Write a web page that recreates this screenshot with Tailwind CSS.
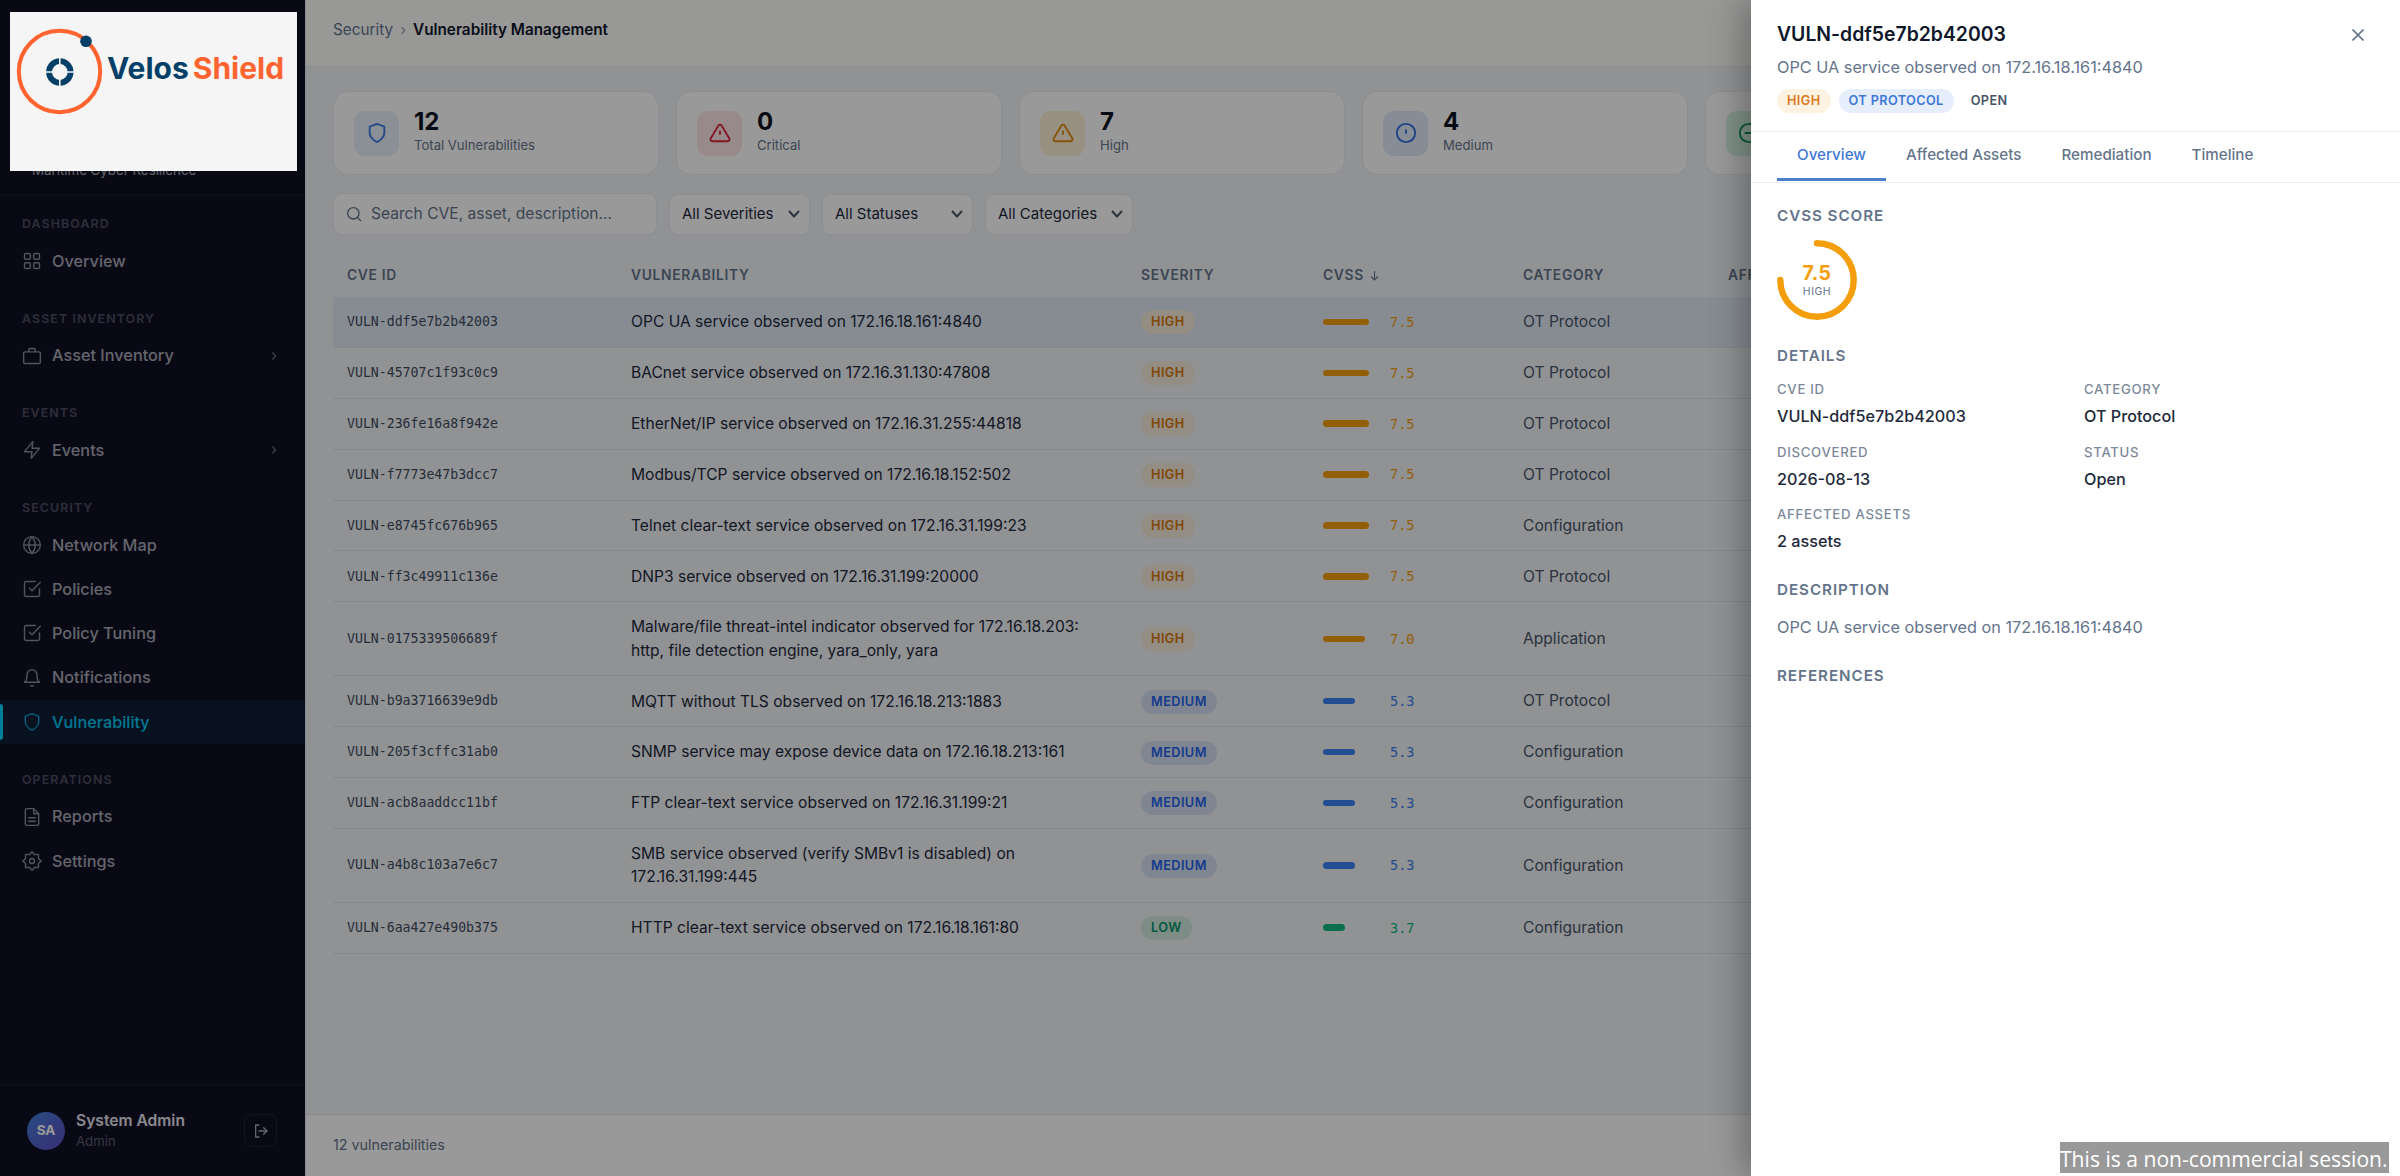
<!DOCTYPE html>
<html lang="en">
<head>
    <meta charset="UTF-8">
    <meta name="viewport" content="width=device-width, initial-scale=1.0">
    <title>Vulnerability Management</title>
    <script src="https://cdn.jsdelivr.net/npm/@tailwindcss/browser@4"></script>
</head>
<body class="bg-[#f1f4f7] font-['Inter','Liberation_Sans',sans-serif]">
<div class="relative flex h-screen w-screen overflow-hidden">

    <!-- Sidebar -->
    <aside class="flex w-[305px] shrink-0 flex-col bg-[#101026] text-[#a9a9b5]">
        <div class="flex h-[196px] shrink-0 items-end border-b border-white/5 px-8 pb-[15px]">
            <p class="text-[13.3px] leading-5">Maritime Cyber Resilience</p>
        </div>
        <nav id="nav" class="flex flex-1 flex-col gap-[21.5px] pt-[14px]"></nav>
        <div class="flex h-[92px] shrink-0 items-center border-t border-white/5 pl-[27px] pr-[28px]">
            <div class="flex size-[38px] items-center justify-center rounded-full bg-linear-to-br from-[#3f7fd8] to-[#5b4bc4] text-[13.5px] font-bold text-white">SA</div>
            <div class="ml-[11px] flex-1">
                <p class="text-[15.6px] font-semibold leading-[20px] text-[#e4e4ec]">System Admin</p>
                <p class="text-[13.2px] leading-[20px] text-[#5d5d70]">Admin</p>
            </div>
            <button class="flex size-[33px] items-center justify-center rounded-lg border border-white/8">
                <svg class="size-4" viewBox="0 0 24 24" fill="none" stroke="currentColor" stroke-width="2" stroke-linecap="round" stroke-linejoin="round"><path d="M9 21H4V3h5"/><path d="M16 17l5-5-5-5"/><path d="M21 12H9"/></svg>
            </button>
        </div>
    </aside>

    <!-- Main -->
    <main class="flex min-w-0 flex-1 flex-col border-l border-[#e2e8f0]">
        <header class="flex h-[67px] shrink-0 items-center gap-[7px] border-b border-[#e8ecf0] bg-[#fdfefc] px-[27px] pb-[6px] text-[15.3px]">
            <span class="text-[#64748b]">Security</span>
            <span class="text-[#94a3b8]">›</span>
            <span class="font-semibold text-[#0f172a]">Vulnerability Management</span>
        </header>

        <div class="flex min-h-0 flex-1 flex-col pl-[27px] pr-[26px] pt-[24px]">
            <div class="grid grid-cols-6 gap-[17px]">
                <div class="flex h-[84px] items-center gap-[15px] rounded-[15px] border border-[#e8ecf0] bg-white pl-[20px]">
                    <div class="flex size-[45px] items-center justify-center rounded-[11px] bg-[#e8eefb] text-[#3b7be0]">
                        <svg class="size-[22px]" viewBox="0 0 24 24" fill="none" stroke="currentColor" stroke-width="2" stroke-linejoin="round"><path d="M12 22s8-4 8-10V5l-8-3-8 3v7c0 6 8 10 8 10z"/></svg>
                    </div>
                    <div class="pb-[4px]">
                        <p class="text-[24px] font-bold leading-[26px] text-[#0b1220]">12</p>
                        <p class="mt-px text-[13.1px] leading-[18px] text-[#64748b]">Total Vulnerabilities</p>
                    </div>
                </div>
                <div class="flex h-[84px] items-center gap-[15px] rounded-[15px] border border-[#e8ecf0] bg-white pl-[20px]">
                    <div class="flex size-[45px] items-center justify-center rounded-[11px] bg-[#fde4e6] text-[#dc2640]">
                        <svg class="size-[22px]" viewBox="0 0 24 24" fill="none" stroke="currentColor" stroke-width="2" stroke-linecap="round" stroke-linejoin="round"><path d="M10.3 3.9L1.8 18a2 2 0 0 0 1.7 3h17a2 2 0 0 0 1.7-3L13.7 3.9a2 2 0 0 0-3.4 0z"/><path d="M12 10v3"/></svg>
                    </div>
                    <div class="pb-[4px]">
                        <p class="text-[24px] font-bold leading-[26px] text-[#0b1220]">0</p>
                        <p class="mt-px text-[13.1px] leading-[18px] text-[#64748b]">Critical</p>
                    </div>
                </div>
                <div class="flex h-[84px] items-center gap-[15px] rounded-[15px] border border-[#e8ecf0] bg-white pl-[20px]">
                    <div class="flex size-[45px] items-center justify-center rounded-[11px] bg-[#fdf0d6] text-[#e08a12]">
                        <svg class="size-[22px]" viewBox="0 0 24 24" fill="none" stroke="currentColor" stroke-width="2" stroke-linecap="round" stroke-linejoin="round"><path d="M10.3 3.9L1.8 18a2 2 0 0 0 1.7 3h17a2 2 0 0 0 1.7-3L13.7 3.9a2 2 0 0 0-3.4 0z"/><path d="M12 10v3"/></svg>
                    </div>
                    <div class="pb-[4px]">
                        <p class="text-[24px] font-bold leading-[26px] text-[#0b1220]">7</p>
                        <p class="mt-px text-[13.1px] leading-[18px] text-[#64748b]">High</p>
                    </div>
                </div>
                <div class="flex h-[84px] items-center gap-[15px] rounded-[15px] border border-[#e8ecf0] bg-white pl-[20px]">
                    <div class="flex size-[45px] items-center justify-center rounded-[11px] bg-[#e2ebfc] text-[#2f6be0]">
                        <svg class="size-[22px]" viewBox="0 0 24 24" fill="none" stroke="currentColor" stroke-width="2" stroke-linecap="round"><circle cx="12" cy="12" r="10"/><path d="M12 9v3"/></svg>
                    </div>
                    <div class="pb-[4px]">
                        <p class="text-[24px] font-bold leading-[26px] text-[#0b1220]">4</p>
                        <p class="mt-px text-[13.1px] leading-[18px] text-[#64748b]">Medium</p>
                    </div>
                </div>
                <div class="flex h-[84px] items-center gap-[15px] rounded-[15px] border border-[#e8ecf0] bg-white pl-[20px]">
                    <div class="flex size-[45px] items-center justify-center rounded-[11px] bg-[#d6f3e6] text-[#10935f]">
                        <svg class="size-[22px]" viewBox="0 0 24 24" fill="none" stroke="currentColor" stroke-width="2" stroke-linecap="round"><circle cx="12" cy="12" r="10"/><path d="M8 12h8"/></svg>
                    </div>
                </div>
            </div>

            <div class="mt-[18px] flex items-center text-[15px] text-[#1e293b]">
                <div class="mr-[12px] flex h-[42px] w-[324px] items-center rounded-[9px] border border-[#e8ecf0] bg-white pl-[12px] text-[15.6px] text-[#64748b]">
                    <svg class="mr-[9px] size-4" viewBox="0 0 24 24" fill="none" stroke="currentColor" stroke-width="2" stroke-linecap="round"><circle cx="11" cy="11" r="8.5"/><path d="M22 22l-5-5"/></svg>
                    Search CVE, asset, description...
                </div>
                <div class="mr-[12px] flex h-[41px] w-[141px] items-center justify-between rounded-[9px] border border-[#e8ecf0] bg-white pl-[12px] pr-[8px]">
                    All Severities
                    <svg class="size-[14px] text-[#475569]" viewBox="0 0 14 14" fill="none" stroke="currentColor" stroke-width="2"><path d="M2 4l5 5.5L12 4"/></svg>
                </div>
                <div class="mr-[12px] flex h-[41px] w-[151px] items-center justify-between rounded-[9px] border border-[#e8ecf0] bg-white pl-[12px] pr-[8px]">
                    All Statuses
                    <svg class="size-[14px] text-[#475569]" viewBox="0 0 14 14" fill="none" stroke="currentColor" stroke-width="2"><path d="M2 4l5 5.5L12 4"/></svg>
                </div>
                <div class="flex h-[41px] w-[148px] items-center justify-between rounded-[9px] border border-[#e8ecf0] bg-white pl-[12px] pr-[8px]">
                    All Categories
                    <svg class="size-[14px] text-[#475569]" viewBox="0 0 14 14" fill="none" stroke="currentColor" stroke-width="2"><path d="M2 4l5 5.5L12 4"/></svg>
                </div>
            </div>

            <div class="mt-[18px] grid h-[44px] shrink-0 grid-cols-[284px_510px_182px_200px_205px_1fr] items-center text-[13.8px] font-semibold tracking-[0.7px] text-[#64748b] *:px-[14px]">
                <div>CVE ID</div>
                <div>VULNERABILITY</div>
                <div>SEVERITY</div>
                <div class="flex items-center gap-[5px]">CVSS
                    <svg class="size-[11px]" viewBox="0 0 11 11" fill="none" stroke="currentColor" stroke-width="1.1"><path d="M5.5 1v9M2 6.5l3.5 3.5L9 6.5"/></svg>
                </div>
                <div>CATEGORY</div>
                <div>AFFECTED</div>
            </div>
            <div id="rows" class="flex flex-col"></div>
        </div>

        <footer class="flex h-[62px] shrink-0 items-center border-t border-[#dfe4ea] bg-white px-[27px] pb-[2px] text-[14.3px] text-[#64748b]">
            12 vulnerabilities
        </footer>
    </main>

    <!-- Dimmed backdrop -->
    <div class="absolute inset-0 bg-black/40"></div>

    <!-- Logo -->
    <div class="absolute left-[10px] top-[12px] flex h-[159px] w-[287px] items-start bg-[#f5f5f5]">
        <svg class="ml-[4px] mt-[14px] h-[92px] w-[92px] shrink-0" viewBox="0 0 92 92" fill="none">
            <circle cx="45.5" cy="45.5" r="40.7" stroke="#ff6430" stroke-width="4"/>
            <circle cx="72" cy="15.3" r="5.8" fill="#033f66"/>
            <circle cx="45.8" cy="46" r="10.8" stroke="#033f66" stroke-width="5.8"/>
            <path d="M45.8 30v32M30 46h32" stroke="#f5f5f5" stroke-width="1.6"/>
        </svg>
        <div class="ml-px mt-[37px] flex gap-[4px] text-[30px] font-bold leading-[38px]">
            <span class="text-[#033f66]">Velos</span><span class="text-[#ff6430]">Shield</span>
        </div>
    </div>

    <!-- Detail panel -->
    <section class="absolute inset-y-0 right-0 w-[649px] bg-white shadow-[-8px_0_32px_rgba(0,0,0,0.3)]">
        <div class="relative h-[131px] px-[26px] pt-[20px]">
            <h2 class="text-[19.4px] font-semibold leading-[28px] text-[#0f172a]">VULN-ddf5e7b2b42003</h2>
            <p class="mt-[7px] text-[16.25px] leading-[24px] text-[#64748b]">OPC UA service observed on 172.16.18.161:4840</p>
            <div class="mt-[10px] flex gap-[8px] text-[12.7px] font-semibold leading-[24px] tracking-[0.4px]">
                <span class="rounded-full bg-[#fef2e2] px-[10px] text-[#d97a1c]">HIGH</span>
                <span class="rounded-full bg-[#e6eefb] px-[10px] text-[#3f78d6]">OT PROTOCOL</span>
                <span class="px-[9px] text-[#475569]">OPEN</span>
            </div>
            <svg class="absolute right-[36px] top-[29px] size-[12px] text-[#64748b]" viewBox="0 0 12 12" fill="none" stroke="currentColor" stroke-width="1.6"><path d="M.5.5l11 11M11.5.5l-11 11"/></svg>
        </div>
        <div class="flex h-[52px] border-y border-[#eceff3] px-[26px] text-[15.2px] font-medium leading-[46px] text-[#64748b]">
            <span class="h-[49px] border-b-[3px] border-[#4a7fcb] px-[20px] text-[#3f78d6]">Overview</span>
            <span class="px-[20px]">Affected Assets</span>
            <span class="px-[20px]">Remediation</span>
            <span class="px-[20px]">Timeline</span>
        </div>
        <div class="px-[26px] pt-[23px]">
            <h3 class="text-[15.2px] font-semibold leading-[20px] tracking-[0.95px] text-[#64748b]">CVSS SCORE</h3>
            <div class="relative mt-[14px] size-[80px]">
                <svg class="size-[80px] -rotate-90" viewBox="0 0 80 80" fill="none"><circle cx="40" cy="40" r="36.7" stroke="#f59e0b" stroke-width="6.4" stroke-linecap="round" pathLength="100" stroke-dasharray="75 100"/></svg>
                <div class="absolute inset-0 flex flex-col items-center justify-center">
                    <span class="text-[19.5px] font-bold leading-[22px] tracking-[0.4px] text-[#f59e0b]">7.5</span>
                    <span class="text-[10.5px] leading-[15px] tracking-[0.5px] text-[#64748b]">HIGH</span>
                </div>
            </div>
            <h3 class="mt-[26px] text-[15.2px] font-semibold leading-[20px] tracking-[0.95px] text-[#64748b]">DETAILS</h3>
            <dl class="mt-[14px] grid grid-cols-[307px_1fr] gap-y-[13.5px]">
                <div><dt class="text-[13.2px] font-medium leading-[18px] tracking-[0.7px] text-[#7c899b]">CVE ID</dt><dd class="mt-[5px] text-[16.2px] font-medium leading-[26px] text-[#1e293b]">VULN-ddf5e7b2b42003</dd></div>
                <div><dt class="text-[13.2px] font-medium leading-[18px] tracking-[0.7px] text-[#7c899b]">CATEGORY</dt><dd class="mt-[5px] text-[16.2px] font-medium leading-[26px] text-[#1e293b]">OT Protocol</dd></div>
                <div><dt class="text-[13.2px] font-medium leading-[18px] tracking-[0.7px] text-[#7c899b]">DISCOVERED</dt><dd class="mt-[5px] text-[16.2px] font-medium leading-[26px] text-[#1e293b]">2026-08-13</dd></div>
                <div><dt class="text-[13.2px] font-medium leading-[18px] tracking-[0.7px] text-[#7c899b]">STATUS</dt><dd class="mt-[5px] text-[16.2px] font-medium leading-[26px] text-[#1e293b]">Open</dd></div>
                <div><dt class="text-[13.2px] font-medium leading-[18px] tracking-[0.7px] text-[#7c899b]">AFFECTED ASSETS</dt><dd class="mt-[5px] text-[16.2px] font-medium leading-[26px] text-[#1e293b]">2 assets</dd></div>
            </dl>
            <h3 class="mt-[26px] text-[15.2px] font-semibold leading-[20px] tracking-[0.95px] text-[#64748b]">DESCRIPTION</h3>
            <p class="mt-[14px] text-[16.25px] leading-[26px] text-[#64748b]">OPC UA service observed on 172.16.18.161:4840</p>
            <h3 class="mt-[26px] text-[15.2px] font-semibold leading-[20px] tracking-[0.95px] text-[#64748b]">REFERENCES</h3>
        </div>
    </section>

    <div class="absolute bottom-[3px] right-[11px] h-[31px] w-[329px] whitespace-nowrap bg-[#999999] font-['Open_Sans','Noto_Sans',sans-serif] text-[21.1px] leading-[33px] text-white">This is a non-commercial session.</div>
</div>

<script>
    const icons = {
        grid: '<rect x="3" y="3" width="7" height="7" rx="1.5"/><rect x="14" y="3" width="7" height="7" rx="1.5"/><rect x="3" y="14" width="7" height="7" rx="1.5"/><rect x="14" y="14" width="7" height="7" rx="1.5"/>',
        bag: '<rect x="2" y="7" width="20" height="14" rx="1.5"/><path d="M8 7V5a2 2 0 0 1 2-2h4a2 2 0 0 1 2 2v2"/>',
        bolt: '<path d="M13 2L3 14h9l-1 8 10-12h-9l1-8z"/>',
        globe: '<circle cx="12" cy="12" r="10"/><path d="M2 12h20M12 2a15 15 0 0 1 4 10 15 15 0 0 1-4 10 15 15 0 0 1-4-10 15 15 0 0 1 4-10z"/>',
        check: '<path d="M9 11l3 3L22 4"/><path d="M21 12v7a2 2 0 0 1-2 2H5a2 2 0 0 1-2-2V5a2 2 0 0 1 2-2h11"/>',
        bell: '<path d="M18 8A6 6 0 0 0 6 8c0 7-3 9-3 9h18s-3-2-3-9"/><path d="M13.7 21a2 2 0 0 1-3.4 0"/>',
        shield: '<path d="M12 22s8-4 8-10V5l-8-3-8 3v7c0 6 8 10 8 10z"/>',
        file: '<path d="M14 2H6a2 2 0 0 0-2 2v16a2 2 0 0 0 2 2h12a2 2 0 0 0 2-2V8z"/><path d="M14 2v6h6M8 13h8M8 17h8"/>',
        gear: '<path d="M12 1l3 3.300 4.800-.100-.100 4.800L23 12l-3.300 3 .100 4.800-4.800-.100L12 23l-3-3.300-4.800.100.100-4.800L1 12l3.300-3-.100-4.800 4.800.100z"/><circle cx="12" cy="12" r="3"/>'
    };

    const sections = [
        ['DASHBOARD', [['grid', 'Overview']]],
        ['ASSET INVENTORY', [['bag', 'Asset Inventory', true]]],
        ['EVENTS', [['bolt', 'Events', true]]],
        ['SECURITY', [['globe', 'Network Map'], ['check', 'Policies'], ['check', 'Policy Tuning'], ['bell', 'Notifications'], ['shield', 'Vulnerability']]],
        ['OPERATIONS', [['file', 'Reports'], ['gear', 'Settings']]]
    ];

    document.getElementById('nav').innerHTML = sections.map(([title, items]) => `
        <div>
            <p class="flex h-[28.8px] items-center pl-[22px] text-[12.4px] font-semibold tracking-[1.1px] text-[#4d4d60]">${title}</p>
            ${items.map(([icon, label, arrow]) => {
                const active = label === 'Vulnerability';
                return `
                <a class="relative flex h-[44.3px] items-center pl-[22px] pr-[28px] text-[16.25px] font-medium ${active ? 'bg-[#0c1d35] text-[#00c8f4]' : ''}">
                    ${active ? '<span class="absolute left-0 top-1 h-[36px] w-[3px] rounded-r bg-[#00d4ff]"></span>' : ''}
                    <svg class="mr-[10px] size-[20px] opacity-80" viewBox="0 0 24 24" fill="none" stroke="currentColor" stroke-width="1.7" stroke-linecap="round" stroke-linejoin="round">${icons[icon]}</svg>
                    ${label}
                    ${arrow ? '<svg class="ml-auto h-[8px] w-[6px] text-[#6a6a7c]" viewBox="0 0 6 8" fill="none" stroke="currentColor" stroke-width="1.3"><path d="M1.5 .5l3 3.500-3 3.500"/></svg>' : ''}
                </a>`;
            }).join('')}
        </div>
    `).join('');

    const vulns = [
        ['VULN-ddf5e7b2b42003', 'OPC UA service observed on 172.16.18.161:4840', 'HIGH', 7.5, 'OT Protocol'],
        ['VULN-45707c1f93c0c9', 'BACnet service observed on 172.16.31.130:47808', 'HIGH', 7.5, 'OT Protocol'],
        ['VULN-236fe16a8f942e', 'EtherNet/IP service observed on 172.16.31.255:44818', 'HIGH', 7.5, 'OT Protocol'],
        ['VULN-f7773e47b3dcc7', 'Modbus/TCP service observed on 172.16.18.152:502', 'HIGH', 7.5, 'OT Protocol'],
        ['VULN-e8745fc676b965', 'Telnet clear-text service observed on 172.16.31.199:23', 'HIGH', 7.5, 'Configuration'],
        ['VULN-ff3c49911c136e', 'DNP3 service observed on 172.16.31.199:20000', 'HIGH', 7.5, 'OT Protocol'],
        ['VULN-0175339506689f', 'Malware/file threat-intel indicator observed for 172.16.18.203:<br>http, file detection engine, yara_only, yara', 'HIGH', 7.0, 'Application'],
        ['VULN-b9a3716639e9db', 'MQTT without TLS observed on 172.16.18.213:1883', 'MEDIUM', 5.3, 'OT Protocol'],
        ['VULN-205f3cffc31ab0', 'SNMP service may expose device data on 172.16.18.213:161', 'MEDIUM', 5.3, 'Configuration'],
        ['VULN-acb8aaddcc11bf', 'FTP clear-text service observed on 172.16.31.199:21', 'MEDIUM', 5.3, 'Configuration'],
        ['VULN-a4b8c103a7e6c7', 'SMB service observed (verify SMBv1 is disabled) on<br>172.16.31.199:445', 'MEDIUM', 5.3, 'Configuration'],
        ['VULN-6aa427e490b375', 'HTTP clear-text service observed on 172.16.18.161:80', 'LOW', 3.7, 'Configuration']
    ];
    const tones = {
        HIGH: { badge: 'bg-[#f5ebdd] text-[#d97706]', bar: 'bg-[#f59e0b]', text: 'text-[#f59e0b]' },
        MEDIUM: { badge: 'bg-[#d6e0f2] text-[#2563eb]', bar: 'bg-[#3b82f6]', text: 'text-[#3b7ff0]' },
        LOW: { badge: 'bg-[#d2e9df] text-[#059669]', bar: 'bg-[#10b981]', text: 'text-[#10b981]' }
    };

    document.getElementById('rows').innerHTML = vulns.map(([id, desc, sev, score, cat], i) => `
        <div class="grid ${desc.includes('<br>') ? 'h-[73.9px]' : 'h-[50.9px]'} shrink-0 grid-cols-[284px_510px_182px_200px_205px_1fr] items-center border-b border-[#dde2e8] text-[15.6px] *:px-[14px] ${i === 0 ? 'bg-[#e2eaf6]' : ''}">
            <div class="font-['DejaVu_Sans_Mono','Liberation_Mono',monospace] text-[13.2px] text-[#3f4c60]">${id}</div>
            <div class="leading-[23.3px] text-[#1e293b]">${desc}</div>
            <div><span class="inline-block rounded-full px-[10px] text-[12.7px] font-semibold leading-[24px] tracking-[0.45px] ${tones[sev].badge}">${sev}</span></div>
            <div class="flex items-center">
                <div class="w-[67px]"><div class="h-[6.5px] rounded-full ${tones[sev].bar}" style="width:${score * 6.07}px"></div></div>
                <span class="font-['DejaVu_Sans_Mono','Liberation_Mono',monospace] text-[13.6px] ${tones[sev].text}">${score.toFixed(1)}</span>
            </div>
            <div class="text-[#475569]">${cat}</div>
            <div></div>
        </div>
    `).join('');
</script>
</body>
</html>
